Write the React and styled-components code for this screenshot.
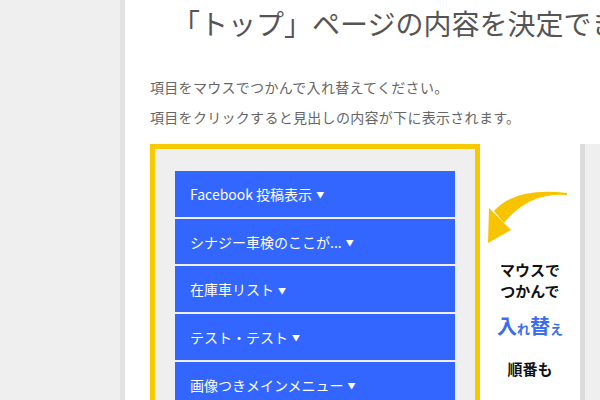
import React from 'react';
import styled, { createGlobalStyle } from 'styled-components';

const GlobalStyle = createGlobalStyle`
  html, body {
    margin: 0;
    padding: 0;
    background: #efefef;
    overflow: hidden;
  }
  body {
    font-family: "Noto Sans CJK JP", "Noto Sans", sans-serif;
  }
`;

const Page = styled.div`
  display: flex;
  width: 600px;
  height: 400px;
  overflow: hidden;
`;

const Sidebar = styled.div`
  width: 120px;
  flex-shrink: 0;
  background: #efefef;
  border-right: 5px solid #e2e2e2;
`;

const Main = styled.div`
  flex: 1;
  min-width: 0;
  background: #fff;
  padding-left: 25px;
  overflow: hidden;
`;

const Title = styled.h1`
  margin: 6px 0 0;
  padding-left: 22px;
  font-size: 28px;
  line-height: 34px;
  font-weight: 400;
  color: #555;
  white-space: nowrap;
`;

const Note = styled.p`
  margin: ${(p) => p.$top || 0}px 0 0;
  font-size: 14px;
  line-height: 30px;
  color: #666;
  letter-spacing: 0.3px;
  white-space: nowrap;
`;

const Workspace = styled.div`
  display: flex;
  margin-top: 12px;
  height: 300px;
`;

const SortBox = styled.div`
  width: 330px;
  flex-shrink: 0;
  box-sizing: border-box;
  border: 5px solid #f9c900;
  background: #efefef;
  padding: 22px 20px 0;
  display: flex;
  flex-direction: column;
  gap: 2px;
`;

const Item = styled.div`
  height: 45.7px;
  flex-shrink: 0;
  background: #3366ff;
  color: #fff;
  font-size: 14px;
  display: flex;
  align-items: center;
  padding-left: 15px;
  white-space: nowrap;
`;

const Caret = styled.span`
  font-size: 8px;
  margin-left: 4px;
  position: relative;
  top: 1px;
`;

const Hint = styled.div`
  width: 100px;
  flex-shrink: 0;
  display: flex;
  flex-direction: column;
  align-items: center;
  position: relative;
`;

const Arrow = styled.svg`
  margin-top: 41px;
  align-self: flex-start;
  margin-left: 3px;
  display: block;
`;

const HintLine = styled.div`
  font-size: 15px;
  line-height: 21px;
  font-weight: 700;
  color: #111;
  margin-top: ${(p) => p.$top || 0}px;
`;

const Swap = styled.div`
  margin-top: 12px;
  line-height: 26px;
  font-weight: 700;
  color: #3a6cf0;
  font-size: 20px;
`;

const Small = styled.span`
  font-size: 13px;
`;

const Corner = styled.div`
  position: absolute;
  right: 14px;
  bottom: 1px;
  width: 0;
  height: 0;
  border-left: 6px solid transparent;
  border-bottom: 6px solid #999;
`;

const Panel = styled.div`
  flex: 1;
  background: #efefef;
  border-left: 5px solid #dcdcdc;
`;

const items = [
  'Facebook 投稿表示',
  'シナジー車検のここが...',
  '在庫車リスト',
  'テスト・テスト',
  '画像つきメインメニュー',
];

export default function App() {
  return (
    <Page>
      <GlobalStyle />
      <Sidebar />
      <Main>
        <Title>「トップ」ページの内容を決定できます</Title>
        <Note $top={32}>項目をマウスでつかんで入れ替えてください。</Note>
        <Note>項目をクリックすると見出しの内容が下に表示されます。</Note>
        <Workspace>
          <SortBox>
            {items.map((label) => (
              <Item key={label}>
                {label}
                <Caret>▼</Caret>
              </Item>
            ))}
          </SortBox>
          <Hint>
            <Arrow width="92" height="65" viewBox="0 0 92 65">
              <path d="M11 26 Q32 2 84 8 L84 10 Q46 7 21 38 Z" fill="#f8c300" />
              <polygon points="6,23 5,58 28,45" fill="#f8c300" />
            </Arrow>
            <HintLine $top={9}>マウスで</HintLine>
            <HintLine>つかんで</HintLine>
            <Swap>
              入<Small>れ</Small>替<Small>え</Small>
            </Swap>
            <HintLine $top={16}>順番も</HintLine>
            <Corner />
          </Hint>
          <Panel />
        </Workspace>
      </Main>
    </Page>
  );
}
